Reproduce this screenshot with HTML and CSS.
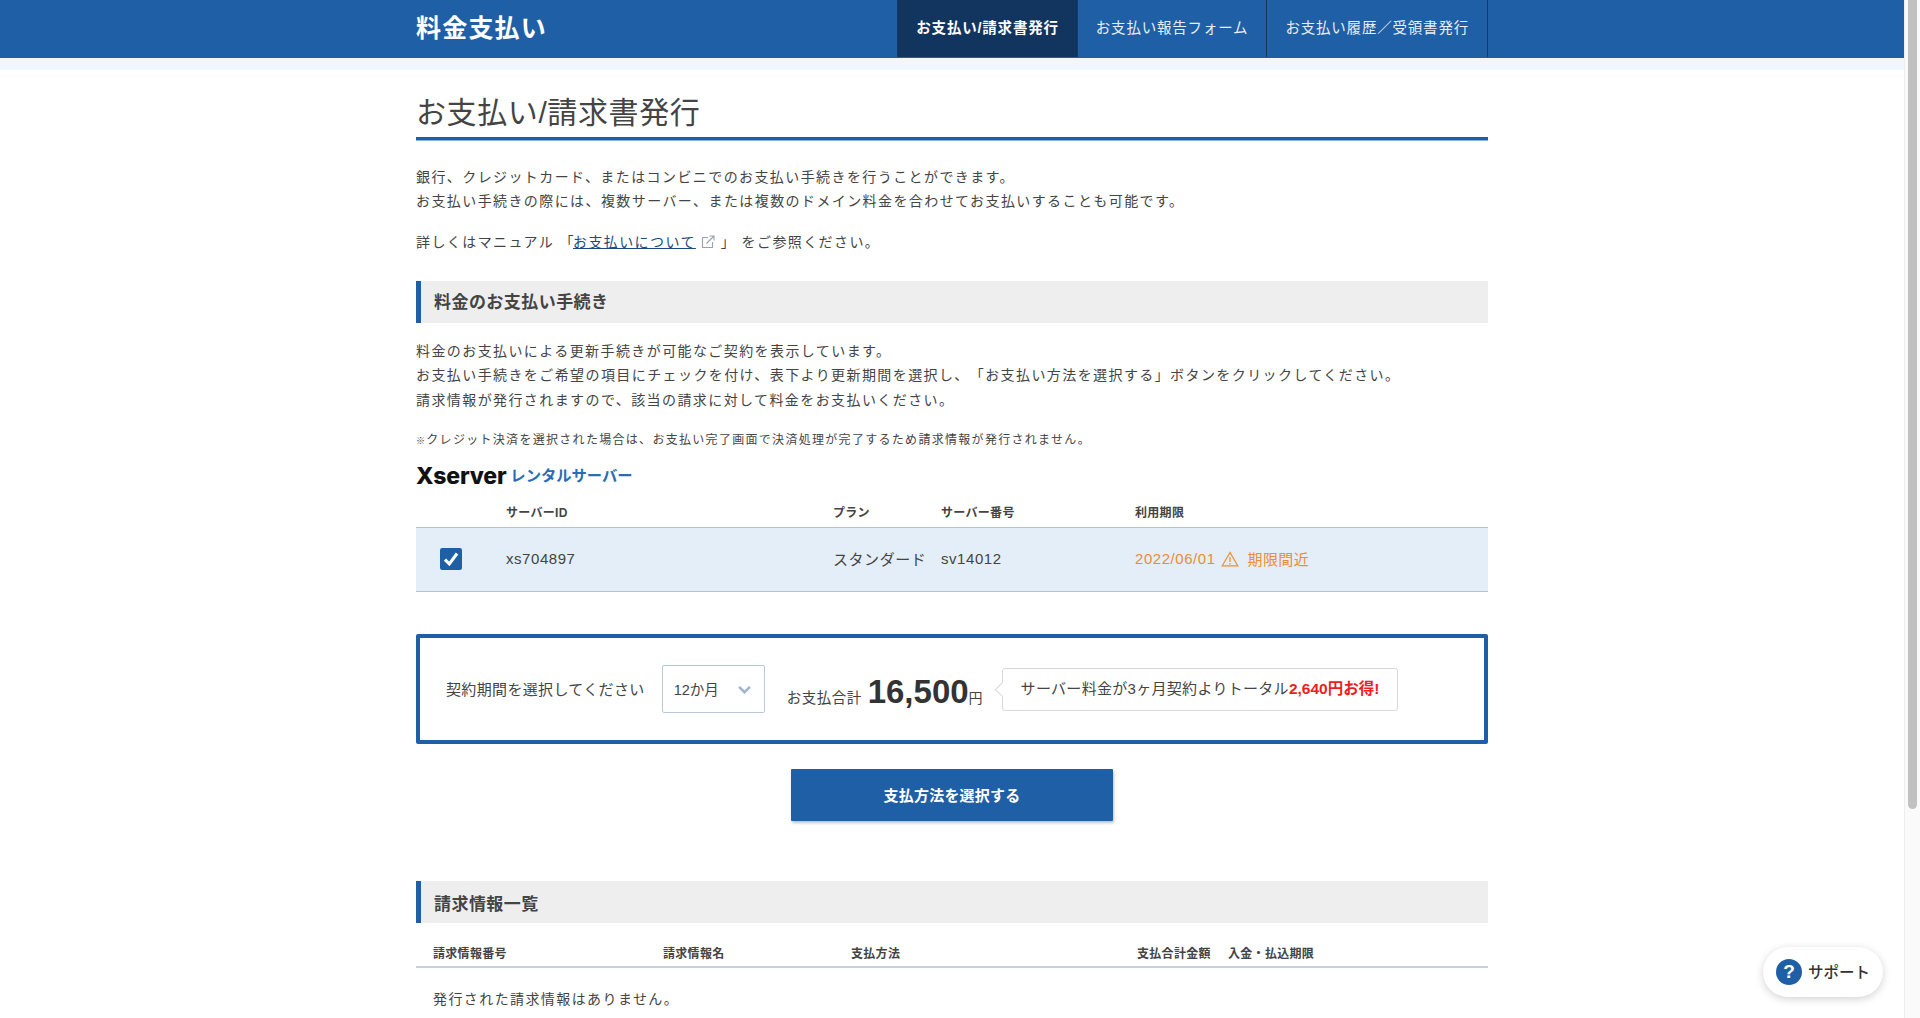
FILE: index.html
```html
<!DOCTYPE html>
<html lang="ja">
<head>
    <meta charset="UTF-8">
    <title>料金支払い</title>
    <link rel="stylesheet" href="styles.css">
</head>
<body>
<div class="page">
    <div class="viewport">
        <header class="topbar">
            <div class="container topbar-inner">
                <div class="topbar-title">料金支払い</div>
                <nav class="topnav">
                    <a class="topnav-item is-active">お支払い/請求書発行</a>
                    <a class="topnav-item">お支払い報告フォーム</a>
                    <a class="topnav-item">お支払い履歴／受領書発行</a>
                </nav>
            </div>
        </header>
        <div class="topband"></div>

        <main class="container">
            <h1 class="page-title">お支払い/請求書発行</h1>

            <p class="text intro">銀行、クレジットカード、またはコンビニでのお支払い手続きを行うことができます。<br>お支払い手続きの際には、複数サーバー、または複数のドメイン料金を合わせてお支払いすることも可能です。</p>
            <p class="text manual">詳しくはマニュアル 「<a class="text-link">お支払いについて</a><svg class="ext-icon" viewBox="0 0 16 16" width="16" height="16" fill="none" stroke="#9aa3ab" stroke-width="1.1"><path d="M8 3.5H2.5v10h10V8"/><path d="M6.5 9.5 13.5 2.5M9.5 2h4.5v4.5"/></svg>」 をご参照ください。</p>

            <h2 class="section-title">料金のお支払い手続き</h2>
            <p class="text section-text">料金のお支払いによる更新手続きが可能なご契約を表示しています。<br>お支払い手続きをご希望の項目にチェックを付け、表下より更新期間を選択し、「お支払い方法を選択する」ボタンをクリックしてください。<br>請求情報が発行されますので、該当の請求に対して料金をお支払いください。</p>
            <p class="note"><span class="note-mark">※</span>クレジット決済を選択された場合は、お支払い完了画面で決済処理が完了するため請求情報が発行されません。</p>

            <div class="logo"><span class="logo-x">Xserver</span><span class="logo-sub">レンタルサーバー</span></div>

            <div class="server-head">
                <span></span>
                <span>サーバーID</span>
                <span>プラン</span>
                <span>サーバー番号</span>
                <span>利用期限</span>
            </div>
            <div class="server-row">
                <span class="check">
                    <svg viewBox="0 0 20 20" width="22" height="22"><rect width="20" height="20" rx="2" fill="#1f5fa6"/><path d="M4.5 10.5 8.5 14.5 15.5 5" fill="none" stroke="#fff" stroke-width="2.8"/></svg>
                </span>
                <span>xs704897</span>
                <span>スタンダード</span>
                <span>sv14012</span>
                <span class="expire">2022/06/01
                    <svg class="warn-icon" viewBox="0 0 18 16" width="18" height="16" fill="none" stroke="#ef8b33" stroke-width="1.2"><path d="M9 1.5 1.2 14.8h15.6z"/><path d="M9 6v5M9 12v1.4"/></svg>
                    <span class="expire-tag">期限間近</span></span>
            </div>

            <div class="period-box">
                <span class="period-label">契約期間を選択してください</span>
                <div class="select"><span class="select-value">12か月</span>
                    <svg viewBox="0 0 12 8" width="13" height="9" fill="none" stroke="#9db4cf" stroke-width="2.2"><path d="M1 1.5 6 6.5 11 1.5"/></svg>
                </div>
                <div class="total">
                    <span class="total-label">お支払合計</span>
                    <span class="total-num">16,500</span>
                    <span class="total-yen">円</span>
                </div>
                <div class="bubble">サーバー料金が3ヶ月契約よりトータル<strong class="bubble-red">2,640円お得!</strong></div>
            </div>

            <div class="action">
                <button type="button" class="btn-primary">支払方法を選択する</button>
            </div>

            <h2 class="section-title second">請求情報一覧</h2>
            <div class="invoice-head">
                <span>請求情報番号</span>
                <span>請求情報名</span>
                <span>支払方法</span>
                <span>支払合計金額</span>
                <span>入金・払込期限</span>
            </div>
            <p class="text invoice-empty">発行された請求情報はありません。</p>
        </main>

        <a class="support">
            <span class="support-icon">?</span>
            <span class="support-text">サポート</span>
        </a>
    </div>
    <div class="scrollbar"><div class="scrollbar-thumb"></div></div>
</div>
</body>
</html>
```

FILE: styles.css
```css
* {
    box-sizing: border-box;
}

html, body {
    margin: 0;
    padding: 0;
    height: 100%;
    overflow: hidden;
}

body {
    font-family: "Liberation Sans", "Noto Sans CJK JP", sans-serif;
    color: #444;
    background: #fff;
    text-spacing-trim: space-all;
}

.page {
    display: flex;
    height: 1018px;
}

.viewport {
    flex: 1;
    position: relative;
    overflow: hidden;
}

.container {
    width: 1072px;
    margin: 0 auto;
}

/* header */
.topbar {
    height: 58px;
    background: #1f5fa6;
}

.topbar-inner {
    display: flex;
    justify-content: space-between;
    height: 100%;
}

.topbar-title {
    color: #fff;
    font-size: 25px;
    font-weight: 700;
    line-height: 57px;
    letter-spacing: 1.2px;
}

.topnav {
    display: flex;
}

.topnav-item {
    display: block;
    height: 57px;
    line-height: 56px;
    padding: 0 18px;
    color: #e6eef7;
    font-size: 14.5px;
    letter-spacing: 0.8px;
    border-right: 1px solid #123a66;
}

.topnav-item.is-active {
    background: #11355f;
    color: #fff;
    font-weight: 700;
    border-left: 1px solid #123a66;
}

.topband {
    height: 12px;
    background: #f2f7fd;
}

/* headings */
.page-title {
    margin: 20px 0 0;
    height: 50px;
    font-size: 30px;
    font-weight: 400;
    line-height: 46px;
    letter-spacing: 0.6px;
    border-bottom: 3px solid #1f5fa6;
    box-shadow: 0 1px 0 #8fb4d8;
    color: #444;
}

.section-title {
    margin: 0;
    height: 42px;
    padding-left: 13px;
    background: #eee;
    border-left: 5px solid #1f5fa6;
    font-size: 17px;
    font-weight: 700;
    line-height: 44px;
    letter-spacing: 0.45px;
}

.section-title.second {
    margin-top: 60px;
    line-height: 47px;
}

/* text */
.text {
    font-size: 14px;
    letter-spacing: 1.41px;
    line-height: 24.5px;
    margin: 0;
}

.intro {
    margin-top: 24.5px;
}

.manual {
    margin-top: 16.5px;
    margin-bottom: 26px;
}

.text-link {
    margin-left: -2px;
    color: #1d4a7a;
    text-decoration: underline;
}

.ext-icon {
    vertical-align: -3px;
    margin-left: 4px;
    margin-right: 5px;
}

.section-text {
    margin-top: 16px;
}

.note {
    margin: 18px 0 0;
    font-size: 12px;
    letter-spacing: 1.3px;
    line-height: 20px;
}

.note-mark {
    font-size: 9px;
    font-weight: 700;
}

/* logo */
.logo {
    display: flex;
    align-items: center;
    margin-top: 11px;
    height: 28px;
    line-height: 28px;
}

.logo-x {
    font-family: "Inter", sans-serif;
    font-size: 23px;
    font-weight: 800;
    color: #111;
    letter-spacing: -0.2px;
}

.logo-sub {
    margin-left: 4px;
    font-size: 15.3px;
    font-weight: 700;
    color: #2a6db5;
}

/* server table */
.server-head, .server-row {
    display: grid;
    grid-template-columns: 90px 327px 108px 194px 1fr;
    align-items: center;
}

.server-head {
    margin-top: 9px;
    height: 28px;
    padding-bottom: 4px;
    font-size: 12px;
    font-weight: 700;
    letter-spacing: 0.3px;
}

.server-row {
    height: 65px;
    padding-bottom: 2px;
    background: #e3eef9;
    border-top: 1px solid #b2c3d4;
    border-bottom: 1px solid #b2c3d4;
    font-size: 15px;
    letter-spacing: 0.55px;
}

.check {
    display: flex;
    padding-left: 24px;
}

.expire {
    display: flex;
    align-items: center;
    gap: 5px;
    color: #ef8b33;
}

.expire-tag {
    margin-left: 4px;
    letter-spacing: 0.35px;
}

/* period box */
.period-box {
    display: flex;
    align-items: center;
    margin-top: 42px;
    height: 110px;
    padding-left: 26px;
    border: 4px solid #1f5fa6;
    border-radius: 2px;
}

.period-label {
    margin-bottom: 2px;
    font-size: 15px;
    letter-spacing: 0.35px;
}

.select {
    display: flex;
    align-items: center;
    justify-content: space-between;
    width: 103px;
    height: 48px;
    margin-left: 17px;
    padding: 0 13px 0 11px;
    border: 1px solid #b9c9d9;
    border-radius: 2px;
    font-size: 14.5px;
}

.select-value {
    margin-bottom: 2px;
}

.total {
    display: flex;
    align-items: baseline;
    margin-left: 22px;
    margin-top: 6px;
}

.total-label {
    font-size: 14.5px;
    letter-spacing: 0.5px;
}

.total-num {
    margin-left: 6px;
    font-size: 33px;
    font-weight: 700;
    color: #333;
}

.total-yen {
    font-size: 14px;
}

.bubble {
    position: relative;
    margin-left: 19px;
    height: 43px;
    padding: 0 18px;
    line-height: 39px;
    border: 1px solid #d8d8d8;
    border-radius: 3px;
    font-size: 15px;
    letter-spacing: 0.3px;
}

.bubble::before {
    content: "";
    position: absolute;
    left: -6px;
    top: 15px;
    width: 10px;
    height: 10px;
    background: #fff;
    border-left: 1px solid #d8d8d8;
    border-bottom: 1px solid #d8d8d8;
    transform: rotate(45deg);
}

.bubble-red {
    color: #f01c1c;
    font-size: 15.5px;
    letter-spacing: 0;
}

/* button */
.action {
    display: flex;
    justify-content: center;
    margin-top: 25px;
}

.btn-primary {
    width: 322px;
    height: 52px;
    padding-bottom: 2px;
    background: #1f5fa6;
    color: #fff;
    border: none;
    border-radius: 1px;
    box-shadow: 1px 2px 3px rgba(0, 0, 0, 0.25);
    font-family: inherit;
    font-size: 15px;
    font-weight: 700;
    letter-spacing: 0.2px;
    cursor: pointer;
}

/* invoice list */
.invoice-head {
    display: grid;
    grid-template-columns: 230px 188px 286px 91px 1fr;
    align-items: center;
    height: 45px;
    padding-left: 17px;
    padding-top: 15px;
    border-bottom: 2px solid #c5d1dc;
    font-size: 12px;
    font-weight: 700;
    letter-spacing: 0.3px;
}

.invoice-empty {
    margin-top: 19px;
    padding-left: 17px;
}

/* floating support button */
.support {
    position: absolute;
    right: 21px;
    bottom: 21px;
    display: flex;
    align-items: center;
    gap: 6px;
    width: 120px;
    height: 50px;
    padding-left: 13px;
    background: #fff;
    border-radius: 25px;
    box-shadow: 0 2px 8px rgba(0, 0, 0, 0.18);
    font-size: 15.5px;
    font-weight: 500;
    color: #333;
}

.support-text {
    margin-bottom: 3px;
}

.support-icon {
    width: 26px;
    height: 26px;
    border-radius: 50%;
    background: #1f5fa6;
    color: #fff;
    font-size: 19px;
    font-weight: 700;
    line-height: 26px;
    text-align: center;
}

/* fake scrollbar, screenshot shows the page scrolled at top */
.scrollbar {
    width: 16px;
    background: #fafafa;
    border-left: 1px solid #eee;
    padding: 0 3px 0 3px;
}

.scrollbar-thumb {
    height: 809px;
    background: #c1c1c1;
    border-radius: 0 0 5px 5px;
}
```
